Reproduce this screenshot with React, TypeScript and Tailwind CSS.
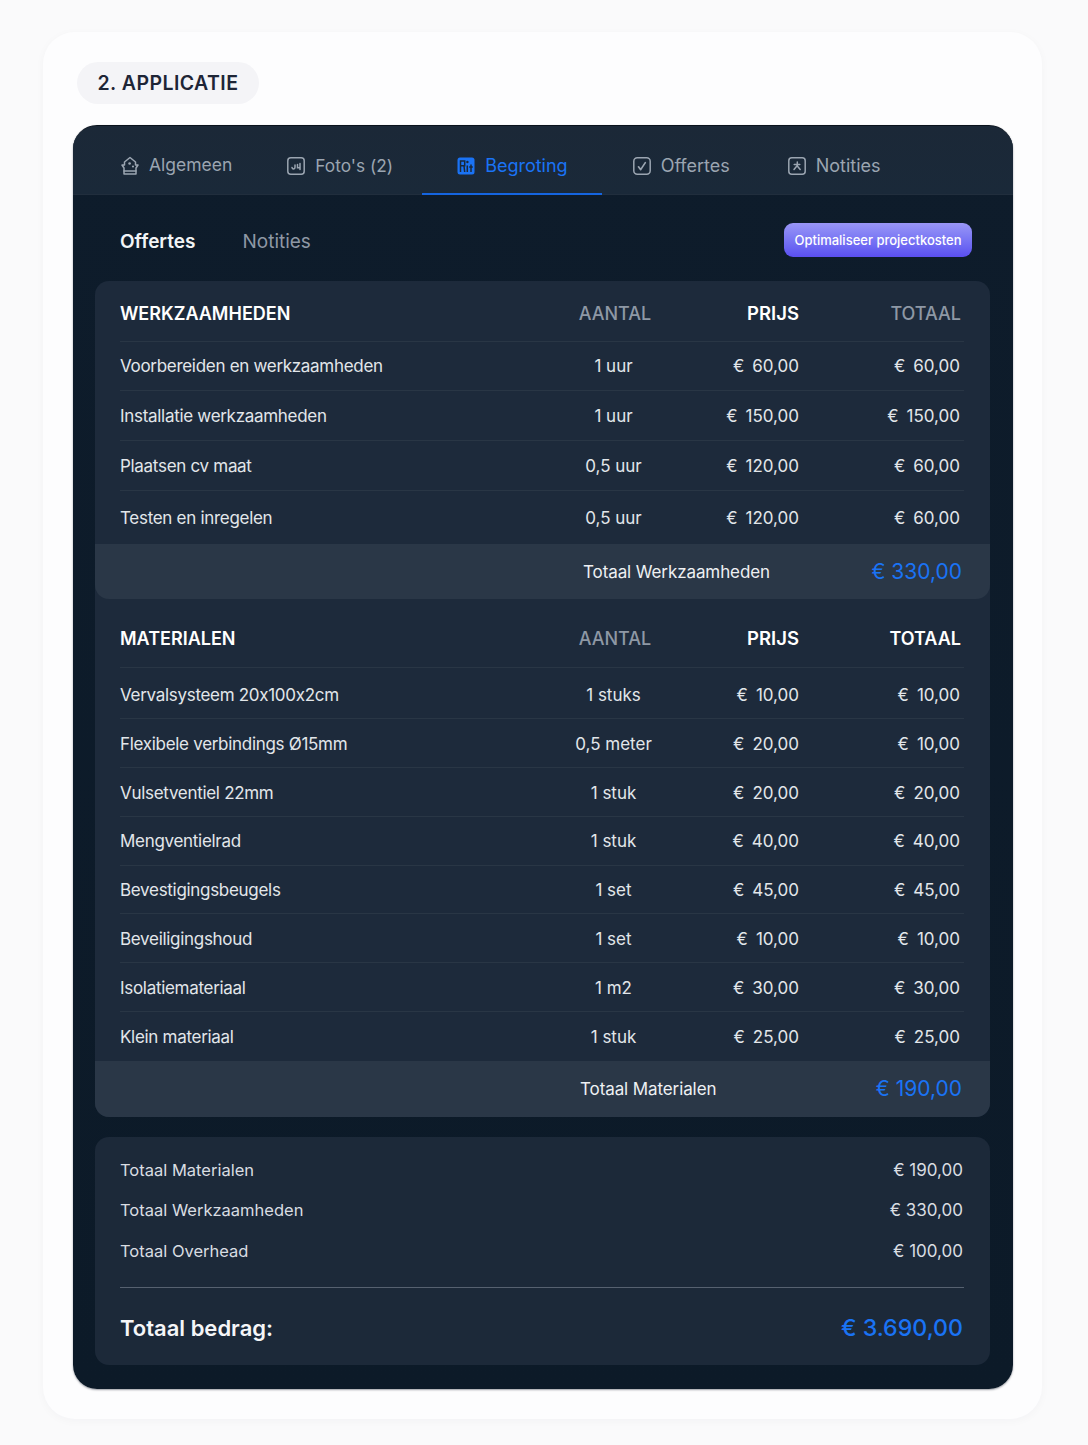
const labor = [
  { name: "Voorbereiden en werkzaamheden", qty: "1 uur", price: "60,00", total: "60,00", row: "h-[49px] pt-[2px]" },
  { name: "Installatie werkzaamheden", qty: "1 uur", price: "150,00", total: "150,00", row: "h-[50px] pt-[2px]" },
  { name: "Plaatsen cv maat", qty: "0,5 uur", price: "120,00", total: "60,00", row: "h-[50px] pt-[2px]" },
  { name: "Testen en inregelen", qty: "0,5 uur", price: "120,00", total: "60,00", row: "h-[53px] pt-[2px]" },
]

const materials = [
  { name: "Vervalsysteem 20x100x2cm", qty: "1 stuks", price: "10,00", total: "10,00", row: "h-[51px] pt-[5px]" },
  { name: "Flexibele verbindings Ø15mm", qty: "0,5 meter", price: "20,00", total: "10,00", row: "h-[49px] pt-[3px]" },
  { name: "Vulsetventiel 22mm", qty: "1 stuk", price: "20,00", total: "20,00", row: "h-[49px] pt-[3px]" },
  { name: "Mengventielrad", qty: "1 stuk", price: "40,00", total: "40,00", row: "h-[49px] pt-[2px]" },
  { name: "Bevestigingsbeugels", qty: "1 set", price: "45,00", total: "45,00", row: "h-[48px] pt-[3px]" },
  { name: "Beveiligingshoud", qty: "1 set", price: "10,00", total: "10,00", row: "h-[49px] pt-[3px]" },
  { name: "Isolatiemateriaal", qty: "1 m2", price: "30,00", total: "30,00", row: "h-[49px] pt-[3px]" },
  { name: "Klein materiaal", qty: "1 stuk", price: "25,00", total: "25,00", row: "h-[49px] pt-[2px]" },
]

const summary = [
  { label: "Totaal Materialen", value: "€ 190,00" },
  { label: "Totaal Werkzaamheden", value: "€ 330,00" },
  { label: "Totaal Overhead", value: "€ 100,00" },
]

const gridCols = "grid grid-cols-[420px_150px_109px_162px]"

function HomeIcon() {
  return (
    <svg viewBox="0 0 18 20" className="h-[20px] w-[18px]" fill="none" stroke="currentColor" strokeWidth="1.5" strokeLinejoin="round" strokeLinecap="round" aria-hidden="true">
      <path d="M9 1.5 14.5 6v3h2.5L15 12v6H3v-6L1 9h2.5V6z" />
      <path d="M3 15h12" />
      <circle cx="8.6" cy="7.5" r="1.3" fill="currentColor" stroke="none" />
      <circle cx="12" cy="10.5" r="1.1" fill="currentColor" stroke="none" />
    </svg>
  )
}

function PhotoIcon() {
  return (
    <svg viewBox="0 0 18 18" className="h-[18px] w-[18px]" fill="none" stroke="currentColor" strokeWidth="1.5" strokeLinecap="round" aria-hidden="true">
      <rect x="0.8" y="0.8" width="16.4" height="16.4" rx="3" />
      <path d="M5 10.5c.5 2 3 1.8 3-.2V8M10.5 7.5v3.3h2.5M13 6.5v6" />
    </svg>
  )
}

function BudgetIcon() {
  return (
    <svg viewBox="0 0 18 18" className="h-[18px] w-[18px]" aria-hidden="true">
      <rect x="0.5" y="0.5" width="17" height="17" rx="2.5" fill="currentColor" />
      <path d="M3.5 15V4h4.2v4.8H3.8M7 9l.7 6M10.3 8.5V15M14 7.5V15M12.2 10h3.6" fill="none" stroke="#1a2838" strokeWidth="1.5" />
      <circle cx="10.4" cy="5" r="1.2" fill="#1a2838" />
    </svg>
  )
}

function CheckIcon() {
  return (
    <svg viewBox="0 0 18 18" className="h-[18px] w-[18px]" fill="none" stroke="currentColor" strokeWidth="1.5" strokeLinecap="round" strokeLinejoin="round" aria-hidden="true">
      <rect x="0.8" y="0.8" width="16.4" height="16.4" rx="3.5" />
      <path d="m5.5 9.8 2.2 2.8 4.6-7" strokeWidth="1.7" />
    </svg>
  )
}

function NoteIcon() {
  return (
    <svg viewBox="0 0 18 18" className="h-[18px] w-[18px]" fill="none" stroke="currentColor" strokeWidth="1.5" strokeLinecap="round" aria-hidden="true">
      <rect x="0.8" y="0.8" width="16.4" height="16.4" rx="3" />
      <path d="M6.2 7.5h5.6M9.3 5v3.5L6 12.5M9.3 9l2.9 3.5" />
    </svg>
  )
}

const tabs = [
  { name: "Algemeen", icon: <HomeIcon />, className: "px-[27px] pt-[10px] text-[17.5px] text-[#9ba5b1]" },
  { name: "Foto's (2)", icon: <PhotoIcon />, className: "pl-[28px] pr-[29px] pt-[10px] text-[17.3px] text-[#9ba5b1]" },
  { name: "Begroting", icon: <BudgetIcon />, className: "pl-[35px] pr-[34px] pt-[12px] text-[18px] text-[#1a73f5] border-b-2 border-[#1565e0]" },
  { name: "Offertes", icon: <CheckIcon />, className: "px-[31px] pt-[10px] text-[18px] text-[#9ba5b1]" },
  { name: "Notities", icon: <NoteIcon />, className: "px-[27px] pt-[10px] text-[18px] text-[#9ba5b1]" },
]

function Money({ value, className = "" }: { value: string; className?: string }) {
  return (
    <span className={`justify-self-end whitespace-nowrap ${className}`}>
      <span className="mr-[8px]">€</span>
      {value}
    </span>
  )
}

function LineRow({ item, last }: { item: (typeof labor)[number]; last: boolean }) {
  return (
    <div className={`${gridCols} ${item.row} items-center text-[17px] text-[#e2e6ea] ${last ? "" : "border-b border-[#293645]"}`}>
      <span className="tracking-[-0.3px]">{item.name}</span>
      <span className="pr-[3px] text-center">{item.qty}</span>
      <Money value={item.price} />
      <Money value={item.total} className="mr-[1px]" />
    </div>
  )
}

function HeadRow({ title, strongTotal, height }: { title: string; strongTotal: boolean; height: string }) {
  return (
    <div className={`${gridCols} ${height} items-center border-b border-[#293645] font-semibold`}>
      <span className="text-white">{title}</span>
      <span className="text-center font-medium text-[#8e98a5]">AANTAL</span>
      <span className="justify-self-end text-[18.5px] text-white">PRIJS</span>
      <span className={`justify-self-end ${strongTotal ? "text-white" : "font-medium text-[#8e98a5]"}`}>TOTAAL</span>
    </div>
  )
}

function TotalBand({ label, value, pad, rounded }: { label: string; value: string; pad: string; rounded: string }) {
  return (
    <div className={`flex items-center justify-between bg-[#2a3747] pr-[28px] ${pad} ${rounded}`}>
      <span className="pt-[2px] text-[17px] tracking-[-0.1px] text-[#eef0f3]">{label}</span>
      <span className="text-[21px] text-[#1a73f5]">{value}</span>
    </div>
  )
}

export default function App() {
  return (
    <div className="h-[1445px] bg-[#fafafb] pl-[43px] pr-[46px] pt-[32px] text-[18px] font-['Inter',sans-serif] [font-feature-settings:'calt'_0]">
      <div className="h-[1387px] rounded-[32px] bg-[#fdfdfe] pt-[30px] pl-[30px] pr-[29px] shadow-[0_2px_10px_rgba(30,40,60,0.03)]">
        <div className="ml-[4px] flex h-[42px] w-[182px] items-center justify-center rounded-full bg-[#f4f4f7] pt-[1px] text-[19.5px] font-semibold tracking-[0.45px] text-[#1e2536]">
          2. APPLICATIE
        </div>

        <div className="mt-[21px] h-[1264px] overflow-hidden rounded-[24px] border-t border-[#0a121c] bg-gradient-to-b from-[#0e1c2b] to-[#0c1a28] shadow-[0_1px_2px_rgba(10,15,30,0.4)]">
          <div className="flex h-[69px] border-b border-[#212e3d] bg-gradient-to-b from-[#1b2837] to-[#1a2939] pl-[21px]">
            {tabs.map((tab) => (
              <div key={tab.name} className={`flex h-[69px] items-center gap-[10px] ${tab.className}`}>
                {tab.icon}
                <span>{tab.name}</span>
              </div>
            ))}
          </div>

          <div className="flex h-[86px] items-center pl-[47px] pr-[41px] pt-[4px]">
            <span className="mt-[4px] text-[19px] font-semibold text-[#f2f4f6]">Offertes</span>
            <span className="ml-[47px] mt-[4px] text-[19px] text-[#8e98a5]">Notities</span>
            <button type="button" className="ml-auto h-[34px] w-[188px] rounded-[9px] bg-gradient-to-b from-[#9a96f6] to-[#5b4ef0] pt-[1px] text-[13px] font-medium text-white">
              Optimaliseer projectkosten
            </button>
          </div>

          <div className="ml-[22px] mr-[23px] overflow-hidden rounded-[14px] bg-[#1d2a3b]">
            <div className="pl-[25px] pr-[26px]">
              <HeadRow title="WERKZAAMHEDEN" strongTotal={false} height="h-[61px] pt-[5px]" />
              {labor.map((item, i) => (
                <LineRow key={item.name} item={item} last={i === labor.length - 1} />
              ))}
            </div>
            <div className="h-[55px] [&>div]:h-full">
              <TotalBand label="Totaal Werkzaamheden" value="€ 330,00" pad="pl-[488px]" rounded="rounded-b-[14px]" />
            </div>
            <div className="pl-[25px] pr-[26px]">
              <HeadRow title="MATERIALEN" strongTotal={true} height="h-[69px] pt-[11px]" />
              {materials.map((item, i) => (
                <LineRow key={item.name} item={item} last={i === materials.length - 1} />
              ))}
            </div>
            <div className="h-[56px] [&>div]:h-full">
              <TotalBand label="Totaal Materialen" value="€ 190,00" pad="pl-[485px]" rounded="" />
            </div>
          </div>

          <div className="ml-[22px] mr-[23px] mt-[20px] h-[228px] rounded-[14px] bg-[#1c2939] pl-[25px] pr-[26px] pt-[13px]">
            {summary.map((row) => (
              <div key={row.label} className="flex h-[40.5px] items-center justify-between text-[#d9dde2]">
                <span className="text-[16.5px]">{row.label}</span>
                <span className="mr-[1px] text-[17px]">{row.value}</span>
              </div>
            ))}
            <div className="mt-[15px] border-t border-[#566170]" />
            <div className="flex h-[81px] items-center justify-between">
              <span className="text-[22px] font-semibold text-[#f5f6f8]">Totaal bedrag:</span>
              <span className="mr-[1px] text-[23.2px] font-medium text-[#1a73f5]">€ 3.690,00</span>
            </div>
          </div>
        </div>
      </div>
    </div>
  )
}
